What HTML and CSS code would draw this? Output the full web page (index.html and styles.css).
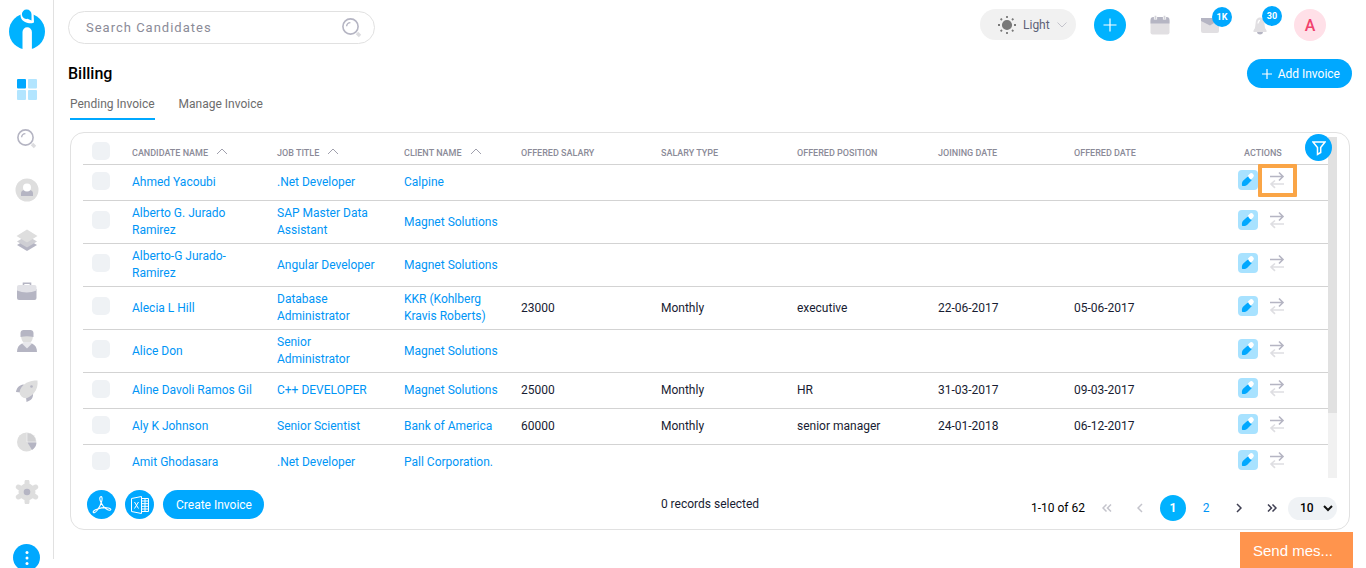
FILE: index.html
```
<!DOCTYPE html>
<html lang="en">
<head>
    <meta charset="UTF-8">
    <meta name="viewport" content="width=device-width, initial-scale=1.0">
    <title>Billing</title>
    <link rel="stylesheet" href="styles.css">
</head>
<body>
    <!-- icons used in more than one place -->
    <svg class="sprite" aria-hidden="true">
        <symbol id="search" viewBox="0 0 20 20">
            <circle cx="8.5" cy="8.5" r="7.6" fill="none" stroke="#b5b5c3" stroke-width="1.6"/>
            <path d="M4.6 8.2a4 4 0 0 1 3.8-3.6" fill="none" stroke="#b5b5c3" stroke-width="1.4"/>
            <path d="M15 15l3 3" stroke="#dcdcdf" stroke-width="3.4"/>
        </symbol>
        <symbol id="edit" viewBox="0 0 20 20">
            <path d="M12 7l1.300-1.300" stroke="#fff" stroke-width="5" stroke-linecap="round"/>
            <path d="M4 15.800c-.3-2.300 0-4 1.300-5.200l4.800-4.400c.8 2 1.800 3 3.800 3.800l-4.600 4.700c-1.300 1.200-3.100 1.500-5.300 1.100z" fill="#00a8ff"/>
        </symbol>
        <symbol id="swap" viewBox="0 0 16 18">
            <path d="M1 5.500h13M10 1.500l4 4-4 4" fill="none" stroke="#b5b5c3" stroke-width="1.600"/>
            <path d="M15 13H2M6 9.500L2 13l4 3.800" fill="none" stroke="#dedee2" stroke-width="1.600"/>
        </symbol>
        <symbol id="up" viewBox="0 0 12 7">
            <path d="M1 6l5-5 5 5" fill="none" stroke="#a0a0ad"/>
        </symbol>
    </svg>

    <div class="app">
        <aside class="sidebar">
            <a class="logo" href="#" aria-label="Home">
                <svg viewBox="0 0 36 42" width="36" height="42">
                    <circle cx="18" cy="22.500" r="18" fill="#00b2ff"/>
                    <path d="M13.500 42V23a4.700 4.700 0 0 1 9.400 0v19z" fill="#fff"/>
                    <path d="M11.500 2h13l.5 11.500-2 .8c-7 .2-11.500-3-11.500-8.300z" fill="#fff"/>
                    <path d="M17.800 .500a4.700 4.700 0 0 1 4.700 4.700v6.300l-4-1.700A4.700 4.700 0 1 1 17.800 .500z" fill="#00b2ff"/>
                </svg>
            </a>
            <nav class="menu" aria-label="Main">
                <a href="#" aria-label="Dashboard"><svg viewBox="0 0 24 24">
                    <rect x="2" y="2" width="9" height="9.500" rx="1" fill="#00a8ff"/>
                    <path d="M13 3a1 1 0 0 1 1-1h7a1 1 0 0 1 1 1v7.500a1 1 0 0 1-1 1h-7a1 1 0 0 1-1-1zM2 14a1 1 0 0 1 1-1h7a1 1 0 0 1 1 1v8a1 1 0 0 1-1 1H3a1 1 0 0 1-1-1zM13 14a1 1 0 0 1 1-1h7a1 1 0 0 1 1 1v8a1 1 0 0 1-1 1h-7a1 1 0 0 1-1-1z" fill="#b2e5ff"/>
                </svg></a>
                <a href="#" aria-label="Search"><svg viewBox="-2 -2 24 24"><use href="#search" width="20" height="20"/></svg></a>
                <a href="#" aria-label="Candidates"><svg viewBox="0 0 24 24">
                    <circle cx="12" cy="12" r="11.500" fill="#dedede"/>
                    <path d="M6 18v-2.500c0-2 1.500-3.500 3.500-3.500h5c2 0 3.500 1.500 3.500 3.500V18z" fill="#b5b5c3"/>
                    <circle cx="12" cy="9.500" r="4" fill="#fff"/>
                </svg></a>
                <a href="#" aria-label="Submissions"><svg viewBox="0 0 24 24">
                    <path d="M12 11l10 6-10 6-10-6z" fill="#b5b5c3"/>
                    <path d="M12 7.500l10 6-10 6-10-6z" fill="#cfcfd4"/>
                    <path d="M12 1.500l10.500 6.500-10.500 6.500-10.500-6.500z" fill="#dedede"/>
                </svg></a>
                <a href="#" aria-label="Jobs"><svg viewBox="0 0 24 24">
                    <path d="M8.500 6V4.200h7V6" fill="none" stroke="#b5b5c3" stroke-width="1.600"/>
                    <path d="M2 10h19.500v9a2 2 0 0 1-2 2h-15.500a2 2 0 0 1-2-2z" fill="#b5b5c3"/>
                    <path d="M2 8a2 2 0 0 1 2-2h15.500a2 2 0 0 1 2 2v3.500c-6 2.500-13.500 2.500-19.500 0z" fill="#e2e2e7"/>
                </svg></a>
                <a href="#" aria-label="Clients"><svg viewBox="0 0 24 24">
                    <path d="M6 6h12c0 5-2 8.500-6 8.500S6 11 6 6z" fill="#dedede"/>
                    <path d="M5.500 8V4c0-2 1.500-3 3-3h7c1.500 0 3 1 3 3v4c-4-1-9-1-13 0z" fill="#b5b5c3"/>
                    <path d="M2 23c0-4 1.500-7 5-8.500h10c3.500 1.500 5 4.500 5 8.500z" fill="#b5b5c3"/>
                    <path d="M7 14.500l2-1.500h6l2 1.500-5 5z" fill="#e8e8ec"/>
                </svg></a>
                <a href="#" aria-label="Campaigns"><svg viewBox="0 0 24 24">
                    <path d="M8 5.500l4 1-6 7-5-.5c.5-3 2-6.500 7-7.500zM11 18l7-4c.5 4.500-1.500 7.500-6.500 9z" fill="#b5b5c3"/>
                    <path d="M22.500 1.500c.5 5-.5 9-3.500 12.500-2.500 3-5.500 4.800-8.500 5.300-3-.3-5.500-2.800-6-5.800.5-4 3-7.500 7-9.700 3.500-1.800 7-2.300 11-2.300z" fill="#dedede"/>
                    <circle cx="16.500" cy="7.500" r="1.300" fill="#b5b5c3"/>
                </svg></a>
                <a href="#" aria-label="Reports"><svg viewBox="0 0 24 24">
                    <circle cx="11.500" cy="12" r="9.500" fill="#dedede"/>
                    <path d="M12 12V2.500a9.500 9.500 0 0 1 9.500 9.500z" fill="#d0d0d2" stroke="#fff" stroke-width=".5"/>
                    <path d="M12.500 12.500h9a9.500 9.500 0 0 1-4.500 7.500z" fill="#b5b5c3"/>
                </svg></a>
                <a href="#" aria-label="Settings"><svg viewBox="0 0 24 24">
                    <path d="M12 2v20M3.300 7l17.400 10M3.300 17l17.400-10" stroke="#dedede" stroke-width="5" stroke-linecap="round"/>
                    <circle cx="12" cy="12" r="8.500" fill="#dedede"/>
                    <circle cx="12" cy="12" r="3.300" fill="#b5b5c3"/>
                </svg></a>
            </nav>
            <button class="more" type="button" aria-label="More">
                <svg viewBox="0 0 4 16" width="4" height="16" fill="#fff"><circle cx="2" cy="2.500" r="1.500"/><circle cx="2" cy="8" r="1.500"/><circle cx="2" cy="13.500" r="1.500"/></svg>
            </button>
        </aside>

        <main class="main">
            <header class="topbar">
                <form class="search">
                    <input type="search" placeholder="Search Candidates" aria-label="Search Candidates">
                    <button type="submit" aria-label="Search"><svg width="20" height="20"><use href="#search"/></svg></button>
                </form>
                <div class="tools">
                    <label class="theme">
                        <svg viewBox="0 0 18 18" width="18" height="18" stroke="#7a7a7a" stroke-width="1.800" aria-hidden="true">
                            <circle cx="9" cy="9" r="4.200" fill="#7a7a7a"/>
                            <path d="M9 0v2M9 16v2M0 9h2M16 9h2M2.600 2.600L4 4M14 14l1.400 1.400M2.600 15.400L4 14M14 4l1.400-1.400"/>
                        </svg>
                        <select aria-label="Theme"><option>Light</option></select>
                        <svg viewBox="0 0 10 6" width="10" height="6" fill="none" stroke="#c4c4cc" aria-hidden="true"><path d="M.500.500L5 5 9.500.500"/></svg>
                    </label>
                    <button class="tool plus" type="button" aria-label="Add">
                        <svg viewBox="0 0 14 14" width="14" height="14" stroke="#fff" stroke-width="1.200"><path d="M7 .500v13M.500 7h13"/></svg>
                    </button>
                    <button class="tool" type="button" aria-label="Calendar">
                        <svg viewBox="0 0 20 20" width="20" height="20">
                            <rect x=".5" y="4" width="19" height="15.500" rx="2" fill="#e1dfe2"/>
                            <path d="M.500 8.500V5a3 3 0 0 1 3-3h13a3 3 0 0 1 3 3v3.500z" fill="#b5b5c3"/>
                            <path d="M5.500.800v3.700M14.500.800v3.700" stroke="#fff" stroke-width="3.200"/>
                            <path d="M5.500.800v3.700M14.500.800v3.700" stroke="#d4d4da" stroke-width="1.800"/>
                        </svg>
                    </button>
                    <button class="tool" type="button" aria-label="Messages">
                        <svg viewBox="0 0 20 20" width="20" height="20">
                            <rect x="1" y="3" width="18" height="15" rx="2" fill="#e1dfe2"/>
                            <path d="M1 3h18v2l-9 5.500L1 6z" fill="#b5b5c3"/>
                        </svg>
                        <span class="badge">1K</span>
                    </button>
                    <button class="tool" type="button" aria-label="Notifications">
                        <svg viewBox="0 0 16 20" width="16" height="20">
                            <path d="M5 17h6c-.3 1.800-1.500 2.500-3 2.500S5.300 18.800 5 17z" fill="#b5b5c3"/>
                            <path d="M8 2.500c3 0 4 2.500 4.300 5l.7 5.500 1.500 2.500v1.500h-13v-1.500L3 13l.7-5.500C4 5 5 2.500 8 2.500z" fill="#e1dfe2"/>
                            <path d="M6 8.500c.2-2 .8-3 2-3.200" fill="none" stroke="#fff" stroke-width="1.200"/>
                        </svg>
                        <span class="badge high">30</span>
                    </button>
                    <button class="tool avatar" type="button">A</button>
                </div>
            </header>

            <div class="page-head">
                <h1>Billing</h1>
                <button class="btn add" type="button">
                    <svg viewBox="0 0 10 10" width="10" height="10" stroke="#fff" stroke-width="1.200"><path d="M5 0v10M0 5h10"/></svg>
                    Add Invoice
                </button>
            </div>

            <nav class="tabs" aria-label="Invoices">
                <a class="active" href="#">Pending Invoice</a>
                <a href="#">Manage Invoice</a>
            </nav>

            <section class="card">
                <button class="filter" type="button" aria-label="Filter">
                    <svg viewBox="0 0 14 16" width="14" height="16" fill="none" stroke="#fff" stroke-width="1.500"><path d="M1 2h12L8.700 7.500v5L5.500 14.500v-7z"/></svg>
                </button>
                <div class="table-area">
                    <div class="table-wrap">
                        <table>
                            <colgroup>
                                <col class="c-check"><col class="c-name"><col class="c-job"><col class="c-client"><col class="c-salary">
                                <col class="c-type"><col class="c-position"><col class="c-joining"><col class="c-offered"><col class="c-actions">
                            </colgroup>
                            <thead>
                                <tr>
                                    <th><input type="checkbox" aria-label="Select all"></th>
                                    <th><button type="button">CANDIDATE NAME <svg width="12" height="7"><use href="#up"/></svg></button></th>
                                    <th><button type="button">JOB TITLE <svg width="12" height="7"><use href="#up"/></svg></button></th>
                                    <th><button type="button">CLIENT NAME <svg width="12" height="7"><use href="#up"/></svg></button></th>
                                    <th>OFFERED SALARY</th>
                                    <th>SALARY TYPE</th>
                                    <th>OFFERED POSITION</th>
                                    <th>JOINING DATE</th>
                                    <th>OFFERED DATE</th>
                                    <th class="actions-head">ACTIONS</th>
                                </tr>
                            </thead>
                            <tbody>
                                <tr>
                                    <td><input type="checkbox" aria-label="Select Ahmed Yacoubi"></td>
                                    <td><a href="#">Ahmed Yacoubi</a></td><td><a href="#">.Net Developer</a></td><td><a href="#">Calpine</a></td>
                                    <td></td><td></td><td></td><td></td><td></td>
                                    <td><div class="actions"><button class="edit" type="button" aria-label="Edit"><svg width="20" height="20"><use href="#edit"/></svg></button><button class="swap marked" type="button" aria-label="Move"><svg width="16" height="18"><use href="#swap"/></svg></button></div></td>
                                </tr>
                                <tr>
                                    <td><input type="checkbox" aria-label="Select Alberto G. Jurado Ramirez"></td>
                                    <td><a href="#">Alberto G. Jurado Ramirez</a></td><td><a href="#">SAP Master Data Assistant</a></td><td><a href="#">Magnet Solutions</a></td>
                                    <td></td><td></td><td></td><td></td><td></td>
                                    <td><div class="actions"><button class="edit" type="button" aria-label="Edit"><svg width="20" height="20"><use href="#edit"/></svg></button><button class="swap" type="button" aria-label="Move"><svg width="16" height="18"><use href="#swap"/></svg></button></div></td>
                                </tr>
                                <tr>
                                    <td><input type="checkbox" aria-label="Select Alberto-G Jurado-Ramirez"></td>
                                    <td><a href="#">Alberto-G Jurado-Ramirez</a></td><td><a href="#">Angular Developer</a></td><td><a href="#">Magnet Solutions</a></td>
                                    <td></td><td></td><td></td><td></td><td></td>
                                    <td><div class="actions"><button class="edit" type="button" aria-label="Edit"><svg width="20" height="20"><use href="#edit"/></svg></button><button class="swap" type="button" aria-label="Move"><svg width="16" height="18"><use href="#swap"/></svg></button></div></td>
                                </tr>
                                <tr>
                                    <td><input type="checkbox" aria-label="Select Alecia L Hill"></td>
                                    <td><a href="#">Alecia L Hill</a></td><td><a href="#">Database Administrator</a></td><td><a href="#">KKR (Kohlberg Kravis Roberts)</a></td>
                                    <td>23000</td><td>Monthly</td><td>executive</td><td>22-06-2017</td><td>05-06-2017</td>
                                    <td><div class="actions"><button class="edit" type="button" aria-label="Edit"><svg width="20" height="20"><use href="#edit"/></svg></button><button class="swap" type="button" aria-label="Move"><svg width="16" height="18"><use href="#swap"/></svg></button></div></td>
                                </tr>
                                <tr>
                                    <td><input type="checkbox" aria-label="Select Alice Don"></td>
                                    <td><a href="#">Alice Don</a></td><td><a href="#">Senior Administrator</a></td><td><a href="#">Magnet Solutions</a></td>
                                    <td></td><td></td><td></td><td></td><td></td>
                                    <td><div class="actions"><button class="edit" type="button" aria-label="Edit"><svg width="20" height="20"><use href="#edit"/></svg></button><button class="swap" type="button" aria-label="Move"><svg width="16" height="18"><use href="#swap"/></svg></button></div></td>
                                </tr>
                                <tr>
                                    <td><input type="checkbox" aria-label="Select Aline Davoli Ramos Gil"></td>
                                    <td><a href="#">Aline Davoli Ramos Gil</a></td><td><a href="#">C++ DEVELOPER</a></td><td><a href="#">Magnet Solutions</a></td>
                                    <td>25000</td><td>Monthly</td><td>HR</td><td>31-03-2017</td><td>09-03-2017</td>
                                    <td><div class="actions"><button class="edit" type="button" aria-label="Edit"><svg width="20" height="20"><use href="#edit"/></svg></button><button class="swap" type="button" aria-label="Move"><svg width="16" height="18"><use href="#swap"/></svg></button></div></td>
                                </tr>
                                <tr>
                                    <td><input type="checkbox" aria-label="Select Aly K Johnson"></td>
                                    <td><a href="#">Aly K Johnson</a></td><td><a href="#">Senior Scientist</a></td><td><a href="#">Bank of America</a></td>
                                    <td>60000</td><td>Monthly</td><td>senior manager</td><td>24-01-2018</td><td>06-12-2017</td>
                                    <td><div class="actions"><button class="edit" type="button" aria-label="Edit"><svg width="20" height="20"><use href="#edit"/></svg></button><button class="swap" type="button" aria-label="Move"><svg width="16" height="18"><use href="#swap"/></svg></button></div></td>
                                </tr>
                                <tr>
                                    <td><input type="checkbox" aria-label="Select Amit Ghodasara"></td>
                                    <td><a href="#">Amit Ghodasara</a></td><td><a href="#">.Net Developer</a></td><td><a href="#">Pall Corporation.</a></td>
                                    <td></td><td></td><td></td><td></td><td></td>
                                    <td><div class="actions"><button class="edit" type="button" aria-label="Edit"><svg width="20" height="20"><use href="#edit"/></svg></button><button class="swap" type="button" aria-label="Move"><svg width="16" height="18"><use href="#swap"/></svg></button></div></td>
                                </tr>
                            </tbody>
                        </table>
                    </div>
                    <div class="track"><div class="thumb"></div></div>
                </div>

                <footer class="card-foot">
                    <div class="exports">
                        <button class="round" type="button" aria-label="Export PDF">
                            <svg viewBox="0 0 20 20" width="20" height="20" fill="none" stroke="#fff" stroke-width="1.100">
                                <path d="M9 7.500C7.800 5 7.500 2.300 8.700 1.700s2 1.800.8 5.300c-.8 3-2.500 6-4.500 8.500-1.500 2-3.200 2.700-3.700 1.900s1-2.400 4.200-3.400c3-1 6-1.500 9-1.300 3 .2 4.600 1 4.300 2s-2.500.6-4.800-1C11.500 12 10 9.800 9 7.500z"/>
                            </svg>
                        </button>
                        <button class="round" type="button" aria-label="Export Excel">
                            <svg viewBox="0 0 20 20" width="20" height="20" fill="none" stroke="#fff">
                                <path d="M11.500 1.500L1.500 3.500v13l10 2zM11.500 3.500h7v13h-7M11.500 6h7M11.500 8.700h7M11.500 11.300h7M11.500 14h7M15 3.500v13M4.500 7l4 6.500M8.500 7l-4 6.500"/>
                            </svg>
                        </button>
                        <button class="btn create" type="button">Create Invoice</button>
                    </div>
                    <span class="selected">0 records selected</span>
                    <div class="pager">
                        <span>1-10 of 62</span>
                        <nav class="pages" aria-label="Pages">
                            <button type="button" aria-label="First page" disabled><svg viewBox="0 0 10 8" width="10" height="8"><path d="M4.500.500L1 4l3.500 3.500M9 .500L5.500 4 9 7.500"/></svg></button>
                            <button type="button" aria-label="Previous page" disabled><svg viewBox="0 0 6 10" width="6" height="10"><path d="M5 1L1 5l4 4"/></svg></button>
                            <button class="current" type="button">1</button>
                            <button class="page" type="button">2</button>
                            <button type="button" aria-label="Next page"><svg viewBox="0 0 6 10" width="6" height="10"><path d="M1 1l4 4-4 4"/></svg></button>
                            <button type="button" aria-label="Last page"><svg viewBox="0 0 10 8" width="10" height="8"><path d="M1 .500L4.500 4 1 7.500M5.500.500L9 4 5.500 7.500"/></svg></button>
                        </nav>
                        <label class="size">
                            <select aria-label="Rows per page"><option>10</option></select>
                            <svg viewBox="0 0 10 7" width="10" height="7" fill="none" stroke="#111" stroke-width="2" aria-hidden="true"><path d="M1 1l4 4 4-4"/></svg>
                        </label>
                    </div>
                </footer>
            </section>
        </main>
    </div>

    <button class="chat" type="button">Send mes...</button>
</body>
</html>
```
FILE: styles.css
```
* {
    box-sizing: border-box;
}
body {
    margin: 0;
    font-family: Roboto, "Liberation Sans", sans-serif;
    font-size: 12px;
    color: #181c32;
    background-color: #fff;
}
button, input, select {
    font: inherit;
    color: inherit;
    border: none;
    background: none;
    padding: 0;
    margin: 0;
}
button {
    cursor: pointer;
}
select {
    appearance: none;
    outline: none;
}
a {
    color: #0095f6;
    text-decoration: none;
}
svg {
    display: block;
    flex-shrink: 0;
}
.sprite {
    display: none;
}
.app {
    display: flex;
    height: 100vh;
    overflow: hidden;
}

/* sidebar */
.sidebar {
    display: flex;
    flex-direction: column;
    align-items: center;
    width: 54px;
    margin-bottom: 9px;
    padding-top: 9px;
    border-right: 1px solid #e1e1e1;
}
.menu {
    flex: 1;
    display: flex;
    flex-direction: column;
    justify-content: space-between;
    margin: 26px 0 40px;
}
.menu svg {
    width: 24px;
    height: 24px;
}
.more {
    display: grid;
    place-items: center;
    width: 27px;
    height: 27px;
    flex-shrink: 0;
    margin-bottom: -12px;
    border-radius: 50%;
    background-color: #00a8ff;
}

/* top bar */
.main {
    flex: 1;
    min-width: 0;
    display: flex;
    flex-direction: column;
    padding: 9px 14px 38px;
}
.topbar {
    display: flex;
    justify-content: space-between;
    align-items: flex-start;
}
.search {
    display: flex;
    align-items: center;
    width: 307px;
    height: 33px;
    margin-top: 2px;
    padding: 0 12px 0 17px;
    border: 1px solid #e1e1e1;
    border-radius: 17px;
}
.search input {
    flex: 1;
    min-width: 0;
    font-size: 13px;
    letter-spacing: 1px;
    outline: none;
}
.search input::placeholder {
    color: #8b8b98;
}
.tools {
    display: flex;
    gap: 18px;
    padding-right: 26px;
}
.theme {
    display: flex;
    align-items: center;
    justify-content: space-between;
    width: 96px;
    height: 31px;
    padding: 0 9px 0 18px;
    border-radius: 16px;
    background-color: #f1f1f1;
    color: #5e6278;
}
.tool {
    position: relative;
    display: grid;
    place-items: center;
    width: 32px;
    height: 32px;
    border-radius: 50%;
}
.plus {
    background-color: #00b2ff;
}
.avatar {
    background-color: #ffe0e8;
    color: #f1416c;
    font-size: 16px;
    font-weight: 500;
}
.badge {
    position: absolute;
    top: -2px;
    right: -6px;
    width: 20px;
    height: 20px;
    border-radius: 50%;
    background-color: #00a8ff;
    color: #fff;
    font-size: 9px;
    font-weight: 700;
    line-height: 20px;
}
.badge.high {
    top: -3px;
}

/* page head and tabs */
.page-head {
    display: flex;
    justify-content: space-between;
    align-items: center;
    margin-top: 15px;
}
h1 {
    margin: 0;
    font-size: 16px;
    font-weight: 500;
    color: #000;
}
.btn {
    height: 29px;
    border-radius: 15px;
    background-color: #00a8ff;
    color: #fff;
}
.add {
    display: flex;
    align-items: center;
    gap: 6px;
    padding: 0 12px 0 15px;
}
.tabs {
    display: flex;
    gap: 24px;
    margin: 8px 2px 12px;
}
.tabs a {
    padding-bottom: 6px;
    border-bottom: 2px solid transparent;
    color: #6c6c6c;
    line-height: 16px;
}
.tabs .active {
    border-color: #00a8ff;
}

/* table card */
.card {
    position: relative;
    flex: 1;
    min-height: 0;
    display: flex;
    flex-direction: column;
    margin: 0 2px;
    padding: 4px 12px 10px;
    border: 1px solid #e1e1e1;
    border-radius: 14px;
}
.filter {
    position: absolute;
    top: 1px;
    right: 17px;
    z-index: 1;
    display: grid;
    place-items: center;
    width: 27px;
    height: 27px;
    border-radius: 50%;
    background-color: #00a8ff;
}
.table-area {
    flex: 1;
    min-height: 0;
    display: flex;
}
.table-wrap {
    flex: 1;
    min-width: 0;
    overflow: hidden;
}
.track {
    width: 9px;
    background-color: #f1f1f1;
}
.thumb {
    height: 81%;
    background-color: #e1e1e1;
}
table {
    width: 100%;
    table-layout: fixed;
    border-collapse: separate;
    border-spacing: 0;
}
.c-check { width: 49px; }
.c-name { width: 145px; }
.c-job { width: 127px; }
.c-client { width: 117px; }
.c-salary { width: 140px; }
.c-type { width: 136px; }
.c-position { width: 141px; }
.c-joining { width: 136px; }
.c-offered { width: 155px; }
.c-actions { width: 99px; }
th, td {
    padding: 4px 20px 4px 0;
    border-bottom: 1px solid #d3d3d3;
    text-align: left;
    vertical-align: middle;
}
th {
    height: 28px;
    padding-bottom: 0;
    font-size: 9px;
    font-weight: 500;
    color: #8b8b98;
    white-space: nowrap;
}
td {
    height: 36px;
    line-height: 17px;
}
th:first-child, td:first-child {
    padding-left: 9px;
}
th button {
    display: flex;
    gap: 8px;
}
th:last-child, td:last-child {
    padding-right: 0;
}
.actions-head {
    padding-left: 15px;
}
input[type="checkbox"] {
    display: block;
    appearance: none;
    width: 18px;
    height: 18px;
    margin-bottom: 4px;
    border-radius: 5px;
    background-color: #eff2f5;
}
input[type="checkbox"]:checked {
    background-color: #00a8ff;
}
.actions {
    display: flex;
    align-items: center;
    gap: 11px;
    padding: 0 0 5px 9px;
}
.edit {
    border-radius: 4px;
    background-color: #a8e2ff;
}
.swap {
    position: relative;
}
.marked::after {
    content: "";
    position: absolute;
    inset: -7px -12px -8px -11px;
    border: 4px solid #faa546;
    border-radius: 1px;
}

/* card footer */
.card-foot {
    display: grid;
    grid-template-columns: 1fr auto 1fr;
    align-items: start;
    height: 29px;
    margin-top: 12px;
}
.exports {
    display: flex;
    gap: 9px;
    padding-left: 4px;
}
.round {
    display: grid;
    place-items: center;
    width: 29px;
    height: 29px;
    border-radius: 50%;
    background-color: #00a8ff;
}
.create {
    padding: 0 12px 0 13px;
}
.selected {
    line-height: 29px;
}
.pager {
    display: flex;
    justify-content: flex-end;
    align-items: center;
    margin-top: 5px;
    color: #000;
}
.pages {
    display: flex;
    gap: 7px;
    padding: 0 3px 0 9px;
}
.pages button {
    display: grid;
    place-items: center;
    width: 26px;
    height: 26px;
    border-radius: 50%;
}
.pages svg {
    fill: none;
    stroke: #3f3f52;
    stroke-width: 1.500;
}
.pages button:disabled svg {
    stroke: #c4c4cc;
}
.pages .current {
    background-color: #00b2ff;
    color: #fff;
    font-weight: 700;
}
.pages .page {
    color: #0095f6;
}
.size {
    display: flex;
    align-items: center;
    justify-content: space-between;
    width: 49px;
    height: 23px;
    padding: 0 4px 0 12px;
    border-radius: 12px;
    background-color: #eff2f5;
    font-weight: 500;
}
.chat {
    position: fixed;
    right: 13px;
    bottom: 0;
    width: 113px;
    height: 36px;
    padding-left: 13px;
    background-color: #ff944d;
    color: #fff;
    font-family: "Liberation Sans", Arial, sans-serif;
    font-size: 15px;
    text-align: left;
}
```
